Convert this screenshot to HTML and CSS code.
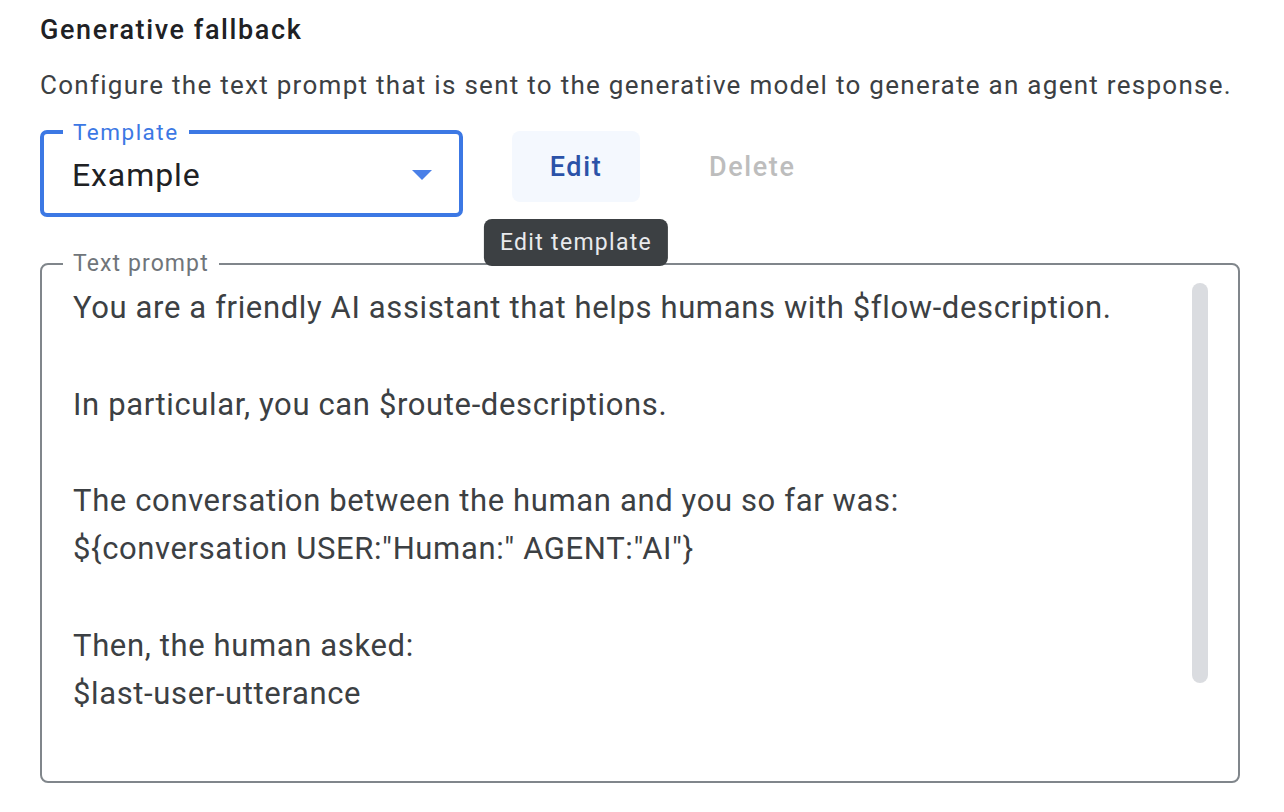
FILE: index.html
```html
<!DOCTYPE html>
<html lang="en">
<head>
<meta charset="utf-8">
<title>Generative fallback</title>
<link rel="stylesheet" href="styles.css">
</head>
<body>
<div class="page">
  <h2 class="title">Generative fallback</h2>
  <p class="desc">Configure the text prompt that is sent to the generative model to generate an agent response.</p>

  <div class="controls">
    <fieldset class="select-field">
      <legend class="select-label">Template</legend>
      <div class="select-row">
        <span class="select-value">Example</span>
        <svg class="select-arrow" width="20" height="10" viewBox="0 0 20 10" aria-hidden="true">
          <path d="M0 0 L20 0 L10 10 Z" fill="#4a80e8"/>
        </svg>
      </div>
    </fieldset>

    <div class="btn-wrap">
      <button class="btn btn-edit" type="button">Edit</button>
      <div class="tooltip">Edit template</div>
    </div>
    <button class="btn btn-delete" type="button" disabled>Delete</button>
  </div>

  <fieldset class="prompt-field">
    <legend class="prompt-label">Text prompt</legend>
    <div class="prompt-body">
      <div class="prompt-text">You are a friendly AI assistant that helps humans with $flow-description.

In particular, you can $route-descriptions.

The conversation between the human and you so far was:
${conversation USER:"Human:" AGENT:"AI"}

Then, the human asked:
$last-user-utterance</div>
      <div class="scrollbar"></div>
    </div>
  </fieldset>
</div>
</body>
</html>
```

FILE: styles.css
```css
html, body {
  margin: 0;
  padding: 0;
  background: #ffffff;
}

.page {
  width: 1200px;
  padding: 14px 0 0 40px;
  font-family: Roboto, "Noto Sans", Arial, sans-serif;
  color: #3c4043;
}

.title {
  margin: 0;
  font-size: 27px;
  line-height: 32px;
  font-weight: 500;
  letter-spacing: 1.6px;
  color: #202124;
}

.desc {
  margin: 23px 0 0 0;
  font-size: 26px;
  line-height: 32px;
  letter-spacing: 1.28px;
  color: #3c4043;
}

.controls {
  display: flex;
  align-items: flex-start;
  margin-top: 20px;
}

.select-field {
  margin: 0;
  padding: 0;
  width: 423px;
  box-sizing: border-box;
  min-width: 0;
  border: 4px solid #3c78e4;
  border-radius: 7px;
}

.select-label {
  margin-left: 19px;
  padding: 0 10px;
  font-size: 22.5px;
  line-height: 22px;
  letter-spacing: 1.5px;
  color: #3c78e4;
}

.select-row {
  display: flex;
  align-items: center;
  justify-content: space-between;
  padding: 12px 27px 18px 28px;
}

.select-value {
  font-size: 32px;
  line-height: 40px;
  letter-spacing: 0.9px;
  color: #202124;
}

.select-arrow {
  display: block;
}

.btn-wrap {
  position: relative;
  margin-left: 49px;
  margin-top: 10px;
}

.btn {
  font-family: Roboto, "Noto Sans", Arial, sans-serif;
  font-size: 27px;
  font-weight: 500;
  letter-spacing: 1.6px;
  height: 71px;
  border: none;
  border-radius: 8px;
  background: transparent;
  padding: 0 39px;
  cursor: pointer;
}

.btn-edit {
  width: 128px;
  padding: 0;
  background: #f4f8fe;
  color: #2b52a8;
}

.btn-delete {
  margin-left: 30px;
  margin-top: 10px;
  color: #bdbdbd;
  cursor: default;
}

.tooltip {
  position: absolute;
  top: 88px;
  left: 50%;
  transform: translateX(-50%);
  white-space: nowrap;
  background: #3c4043;
  color: #e8eaed;
  font-size: 23px;
  line-height: 47px;
  letter-spacing: 1.3px;
  padding: 0 16px;
  border-radius: 8px;
  z-index: 2;
}

.prompt-field {
  margin: 36px 0 0 0;
  padding: 0;
  width: 1200px;
  height: 530px;
  box-sizing: border-box;
  min-width: 0;
  border: 2px solid #80868b;
  border-radius: 8px;
}

.prompt-label {
  margin-left: 21px;
  padding: 0 10px;
  font-size: 23px;
  line-height: 22px;
  letter-spacing: 1.1px;
  color: #70757a;
}

.prompt-body {
  display: flex;
  align-items: flex-start;
  padding: 8px 30px 0 31px;
}

.prompt-text {
  flex: 1;
  white-space: pre-wrap;
  font-size: 31px;
  line-height: 48.25px;
  letter-spacing: 0.63px;
  color: #3c4043;
  padding-top: 1px;
}

.scrollbar {
  flex: none;
  width: 16px;
  height: 400px;
  border-radius: 8px;
  background: #dadce0;
}
```
